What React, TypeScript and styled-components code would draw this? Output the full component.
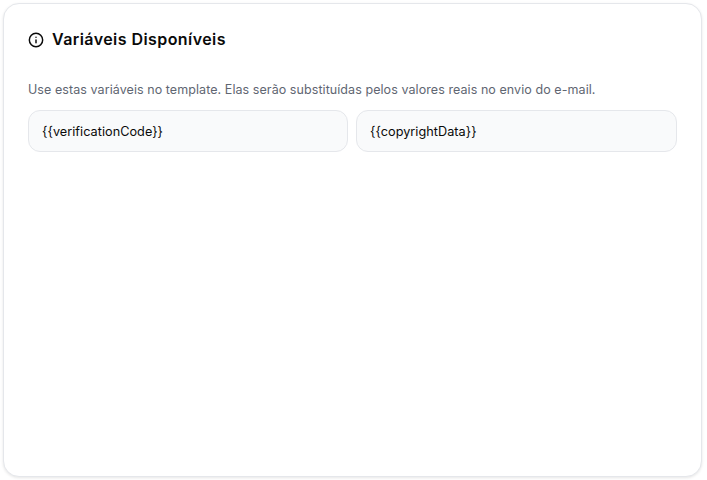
import { createGlobalStyle } from "styled-components";
import styled from "styled-components";
import { Info } from "lucide-react";

const GlobalStyle = createGlobalStyle`
  html, body {
    margin: 0;
    padding: 0;
    background: #ffffff;
  }
  * {
    box-sizing: border-box;
  }
`;

const variables = ["{{verificationCode}}", "{{copyrightData}}"];

export default function App() {
  return (
    <>
      <GlobalStyle />
      <Page>
        <Card>
          <Header>
            <Info size={16} strokeWidth={2.2} color="#0a0a0a" />
            <Title>Variáveis Disponíveis</Title>
          </Header>
          <Description>
            Use estas variáveis no template. Elas serão substituídas pelos valores reais no envio do e-mail.
          </Description>
          <VariableGrid>
            {variables.map((name) => (
              <VariableItem key={name}>{name}</VariableItem>
            ))}
          </VariableGrid>
        </Card>
      </Page>
    </>
  );
}

const Page = styled.div`
  width: 707px;
  height: 480px;
  padding: 3px 5px 3px 3px;
  font-family: "Inter", "Noto Sans", sans-serif;
`;

const Card = styled.div`
  width: 100%;
  height: 100%;
  padding: 24px;
  background: #ffffff;
  border: 1px solid #e5e7eb;
  border-radius: 16px;
  box-shadow: 0 1px 3px rgba(0, 0, 0, 0.1);
`;

const Header = styled.div`
  display: flex;
  align-items: center;
  gap: 8px;
  height: 24px;
`;

const Title = styled.h2`
  margin: 0 0 2px;
  font-size: 16px;
  line-height: 22px;
  font-weight: 600;
  letter-spacing: 0.43px;
  color: #0a0a0a;
`;

const Description = styled.p`
  margin: 28px 0 0;
  font-size: 12.5px;
  line-height: 20px;
  letter-spacing: 0.07px;
  color: #5f6672;
`;

const VariableGrid = styled.div`
  display: grid;
  grid-template-columns: 320px 1fr;
  gap: 8px;
  margin-top: 10px;
`;

const VariableItem = styled.div`
  display: flex;
  align-items: center;
  height: 42px;
  padding: 0 13px;
  background: #f9fafb;
  border: 1px solid #e5e7eb;
  border-radius: 12px;
  font-size: 12.7px;
  letter-spacing: 0.03px;
  color: #0a0a0a;
`;
